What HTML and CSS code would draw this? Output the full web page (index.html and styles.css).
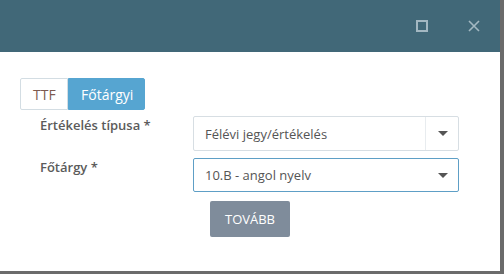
FILE: index.html
```html
<!DOCTYPE html>
<html lang="hu">
<head>
    <meta charset="UTF-8">
    <title>Értékelés</title>
    <link rel="stylesheet" href="styles.css">
</head>
<body>
    <div class="modal">
        <div class="modal-header">
            <span class="header-icon">
                <svg width="12" height="12" viewBox="0 0 12 12"><rect x="1" y="1" width="10" height="10" fill="none" stroke="#a3b8c2" stroke-width="2"/></svg>
            </span>
            <span class="header-icon">
                <svg width="12" height="12" viewBox="0 0 12 12"><path d="M1 1 L11 11 M11 1 L1 11" stroke="#a3b8c2" stroke-width="1.6"/></svg>
            </span>
        </div>

        <div class="modal-body">
            <div class="tabs">
                <button class="tab">TTF</button>
                <button class="tab active">Főtárgyi</button>
            </div>

            <div class="form-row">
                <label class="label">Értékelés típusa *</label>
                <div class="select">
                    <span class="select-text">Félévi jegy/értékelés</span>
                    <span class="select-arrow split"><i class="caret"></i></span>
                </div>
            </div>

            <div class="form-row">
                <label class="label">Főtárgy *</label>
                <div class="select focused">
                    <span class="select-text">10.B - angol nyelv</span>
                    <span class="select-arrow"><i class="caret"></i></span>
                </div>
            </div>

            <div class="actions">
                <button class="button">TOVÁBB</button>
            </div>
        </div>
    </div>
</body>
</html>
```

FILE: styles.css
```css
body {
    margin: 0;
    background-color: #6b6b6b;
    font-family: 'Open Sans', sans-serif;
    width: 504px;
    height: 274px;
    overflow: hidden;
}
.modal {
    width: 500px;
    height: 271px;
    background: #fff;
}
.modal-header {
    height: 52px;
    background-color: #416878;
    display: flex;
    justify-content: flex-end;
    align-items: center;
    gap: 40px;
    padding: 0 20px 0 0;
    box-sizing: border-box;
}
.header-icon {
    display: flex;
    width: 12px;
    height: 12px;
}
.modal-body {
    padding: 26px 0 0 20px;
}
.tabs {
    display: flex;
    height: 32px;
}
.tab {
    font-family: 'Open Sans', sans-serif;
    font-size: 14px;
    color: #7d5a4f;
    background: #fff;
    border: 1px solid #d3dde3;
    border-radius: 2px 0 0 2px;
    padding: 0 12px;
    height: 32px;
    margin: 0;
    width: 48px;
    cursor: pointer;
}
.tab.active {
    color: #fff;
    background-color: #56a5d1;
    border-color: #56a5d1;
    border-radius: 0 2px 2px 0;
    width: 77px;
}
.form-row {
    display: flex;
    align-items: flex-start;
    margin-top: 6px;
}
.form-row + .form-row {
    margin-top: 7px;
}
.label {
    width: 153px;
    padding-left: 20px;
    font-size: 13px;
    font-weight: 600;
    color: #5b5b5b;
    line-height: 18px;
}
.select {
    width: 266px;
    height: 35px;
    box-sizing: border-box;
    border: 1px solid #d7dee3;
    border-radius: 2px;
    display: flex;
    align-items: center;
    font-size: 13px;
    color: #555;
}
.select.focused {
    border-color: #5e9fc6;
    height: 34px;
}
.select-text {
    flex: 1;
    padding-left: 11px;
}
.select-arrow {
    width: 32px;
    height: 100%;
    display: flex;
    align-items: center;
    justify-content: center;
}
.select-arrow.split {
    border-left: 1px solid #e8ecef;
}
.caret {
    width: 0;
    height: 0;
    border-left: 5px solid transparent;
    border-right: 5px solid transparent;
    border-top: 5px solid #555;
    margin-left: 2px;
}
.actions {
    padding: 9px 0 0 190px;
}
.button {
    width: 80px;
    height: 36px;
    border: none;
    border-radius: 2px;
    background-color: #7f8c9b;
    color: #fff;
    font-family: 'Open Sans', sans-serif;
    font-size: 13px;
    cursor: pointer;
}
```
